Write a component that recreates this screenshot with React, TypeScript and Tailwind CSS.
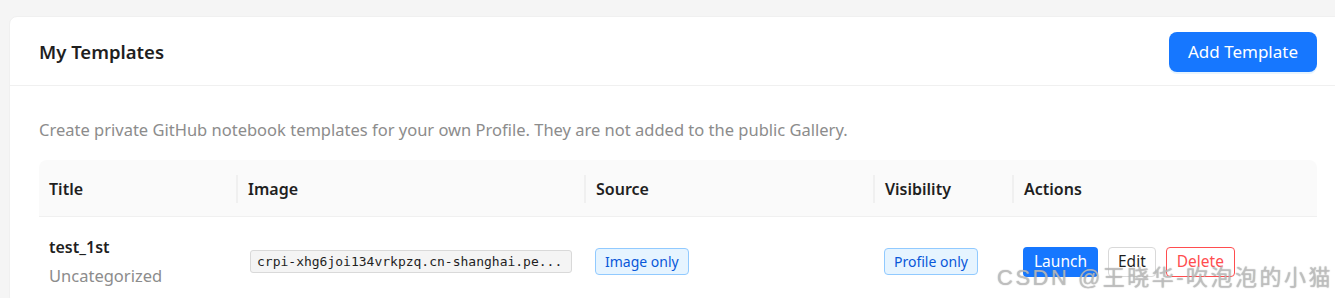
import React from "react";

const font = { fontFamily: '"Noto Sans", "Open Sans", sans-serif' };

export default function App() {
  return (
    <div className="relative w-[1335px] h-[298px] overflow-hidden bg-[#f5f5f5]" style={font}>
      <div className="ml-[9px] mt-[16px] w-[1338px] rounded-[8px] border border-[#f0f0f0] bg-white">
        <div className="flex h-[69px] items-center justify-between border-b border-[#f0f0f0] px-[29px] pt-[2px]">
          <div className="text-[18.5px] font-semibold text-[#1f1f1f]">My Templates</div>
          <button className="h-[40px] rounded-[8px] bg-[#1677ff] px-[19px] text-[17px] text-white shadow-[0_2px_0_rgba(5,145,255,0.1)]">
            Add Template
          </button>
        </div>
        <div className="px-[29px] pt-[32px]">
          <p className="text-[16.5px] leading-[24px] text-[#8c8c8c]">
            Create private GitHub notebook templates for your own Profile. They are not added to the public Gallery.
          </p>
          <div className="mt-[18px] w-[1278px]">
            <div className="grid h-[57px] grid-cols-[197px_348px_289px_139px_1fr] items-center rounded-t-[8px] border-b border-[#f0f0f0] bg-[#fafafa] pt-[2px] text-[16px] font-semibold text-[#1f1f1f]">
              <div className="pl-[10px]">Title</div>
              <div className="flex items-center">
                <span className="mr-[10px] h-[28px] w-[2px] bg-[#f0f0f0]" />
                Image
              </div>
              <div className="flex items-center">
                <span className="mr-[10px] h-[28px] w-[2px] bg-[#f0f0f0]" />
                Source
              </div>
              <div className="flex items-center">
                <span className="mr-[10px] h-[28px] w-[2px] bg-[#f0f0f0]" />
                Visibility
              </div>
              <div className="flex items-center">
                <span className="mr-[10px] h-[28px] w-[2px] bg-[#f0f0f0]" />
                Actions
              </div>
            </div>
            <div className="grid grid-cols-[197px_348px_289px_139px_1fr] items-center pt-[16px] pb-[14px]">
              <div className="pl-[10px]">
                <div className="text-[16px] font-semibold leading-[28px] text-[#1f1f1f]">test_1st</div>
                <div className="text-[16.5px] leading-[29px] text-[#8c8c8c]">Uncategorized</div>
              </div>
              <div className="pl-[14px]">
                <div
                  className="flex h-[23px] w-[322px] items-center rounded-[3px] border border-[#d9d9d9] bg-[#f4f4f4] pl-[6px] text-[13px] text-[#1f1f1f]"
                  style={{ fontFamily: '"DejaVu Sans Mono", "Liberation Mono", monospace' }}
                >
                  crpi-xhg6joi134vrkpzq.cn-shanghai.pe...
                </div>
              </div>
              <div className="pl-[11px]">
                <span className="inline-flex h-[27px] items-center rounded-[4px] border border-[#91caff] bg-[#e6f4ff] px-[9px] text-[14px] text-[#0958d9]">
                  Image only
                </span>
              </div>
              <div className="pl-[11px]">
                <span className="inline-flex h-[27px] items-center rounded-[4px] border border-[#91caff] bg-[#e6f4ff] px-[9px] text-[14px] text-[#0958d9]">
                  Profile only
                </span>
              </div>
              <div className="flex items-center gap-[10px] pl-[11px]">
                <button className="h-[30px] rounded-[4px] bg-[#1677ff] px-[11px] text-[15.5px] text-white">Launch</button>
                <button className="h-[30px] rounded-[4px] border border-[#d9d9d9] bg-white px-[9px] text-[15.5px] text-[#1f1f1f]">Edit</button>
                <button className="h-[30px] rounded-[4px] border border-[#ff4d4f] bg-white px-[10px] text-[15.5px] text-[#ff4d4f]">Delete</button>
              </div>
            </div>
          </div>
        </div>
      </div>
      <div
        className="pointer-events-none absolute left-[997px] top-[261px] whitespace-nowrap text-[22px] tracking-[2.5px] text-[rgba(205,205,205,0.7)] [text-shadow:0_0_1px_rgba(120,120,120,0.8)]"
        style={{ fontFamily: '"Liberation Sans", "Noto Sans CJK SC", sans-serif' }}
      >
        CSDN @王晓华-吹泡泡的小猫
      </div>
    </div>
  );
}
